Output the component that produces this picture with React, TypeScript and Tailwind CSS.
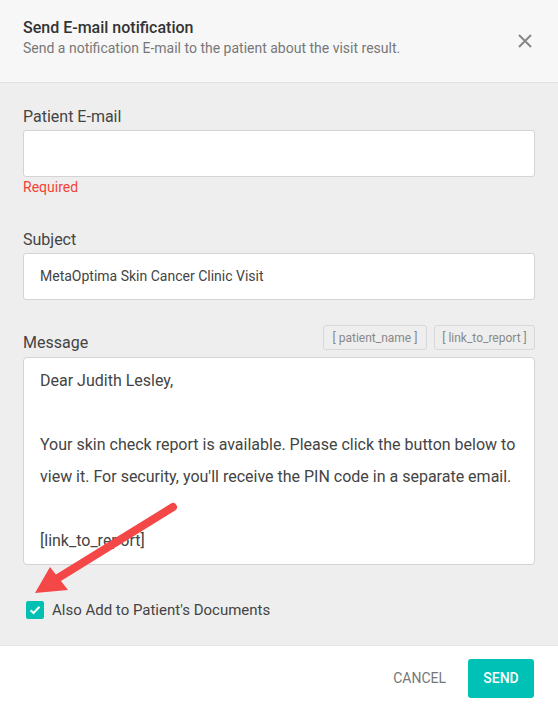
const FONT = { fontFamily: "Roboto, 'Liberation Sans', sans-serif" };

const MESSAGE = [
  "Dear Judith Lesley,",
  "",
  "Your skin check report is available. Please click the button below to",
  "view it. For security, you'll receive the PIN code in a separate email.",
  "",
  "[link_to_report]",
];

export default function App() {
  return (
    <div className="relative w-[558px] h-[710px] flex flex-col bg-white" style={FONT}>
      <Header />
      <div className="flex-1 flex flex-col bg-[#eeeeee] px-[23px] pt-[24px]">
        <label className="text-[16px] leading-[20px] text-[#444]">Patient E-mail</label>
        <div className="mt-[3px] h-[47px] bg-white border border-[#d4d4d4] rounded-[3px]" />
        <div className="mt-[1px] text-[14px] leading-[18px] text-[#f44336]">Required</div>

        <label className="mt-[34px] text-[16px] leading-[20px] text-[#444]">Subject</label>
        <div className="mt-[3px] h-[47px] flex items-center px-[16px] bg-white border border-[#d4d4d4] rounded-[3px] text-[14px] text-[#444]">
          MetaOptima Skin Cancer Clinic Visit
        </div>

        <div className="mt-[25px] flex items-end justify-between">
          <label className="text-[16px] leading-[20px] text-[#444] mb-[-3px]">Message</label>
          <div className="flex gap-[7px]">
            <Tag text="[ patient_name ]" w="w-[104px]" />
            <Tag text="[ link_to_report ]" w="w-[101px]" />
          </div>
        </div>
        <div className="mt-[7px] h-[208px] bg-white border border-[#d4d4d4] rounded-[4px] px-[16px] pt-[7px] text-[16px] leading-[32px] text-[#444]">
          {MESSAGE.map((line, i) => (
            <div key={i} className="h-[32px] whitespace-nowrap">
              {line}
            </div>
          ))}
        </div>

        <div className="mt-[34px] flex items-center gap-[8px] pl-[3px]">
          <span className="w-[18px] h-[18px] rounded-[2px] bg-[#00bfb3] flex items-center justify-center">
            <svg width="12" height="10" viewBox="0 0 12 10">
              <path d="M1.5 5.2 L4.5 8 L10.5 1.8" fill="none" stroke="white" strokeWidth="2" />
            </svg>
          </span>
          <span className="text-[15px] text-[#444]">Also Add to Patient's Documents</span>
        </div>
      </div>
      <div className="h-[65px] shrink-0 bg-white border-t border-[#e6e6e6] flex items-center justify-end gap-[22px] pr-[24px]">
        <button className="text-[14px] text-[#777] uppercase">Cancel</button>
        <button className="w-[66px] h-[39px] rounded-[3px] bg-[#00c1b5] text-white text-[14px] font-medium uppercase">
          Send
        </button>
      </div>

      <svg className="absolute left-0 top-0 pointer-events-none" width="558" height="710">
        <line x1="173" y1="507" x2="58" y2="578" stroke="#f44848" strokeWidth="8" strokeLinecap="round" />
        <polygon points="35,593 50,567 68,590" fill="#f44848" />
      </svg>
    </div>
  );
}

const Header = () => {
  return (
    <div className="h-[83px] shrink-0 bg-[#f7f7f7] border-b border-[#e2e2e2] flex items-start justify-between pl-[23px] pr-[26px] pt-[18px]">
      <div className="flex flex-col">
        <h2 className="text-[16px] leading-[20px] font-medium text-[#333]">Send E-mail notification</h2>
        <p className="mt-[1px] text-[14px] leading-[18px] text-[#777]">
          Send a notification E-mail to the patient about the visit result.
        </p>
      </div>
      <svg className="mt-[16px]" width="14" height="14" viewBox="0 0 14 14">
        <path d="M1 1 L13 13 M13 1 L1 13" stroke="#888" strokeWidth="2" />
      </svg>
    </div>
  );
};

const Tag = ({ text, w }: { text: string; w: string }) => {
  return (
    <span
      className={`${w} h-[25px] flex items-center justify-center bg-[#eeeeee] border border-[#d8d8d8] rounded-[3px] text-[12px] text-[#888]`}
    >
      {text}
    </span>
  );
};
